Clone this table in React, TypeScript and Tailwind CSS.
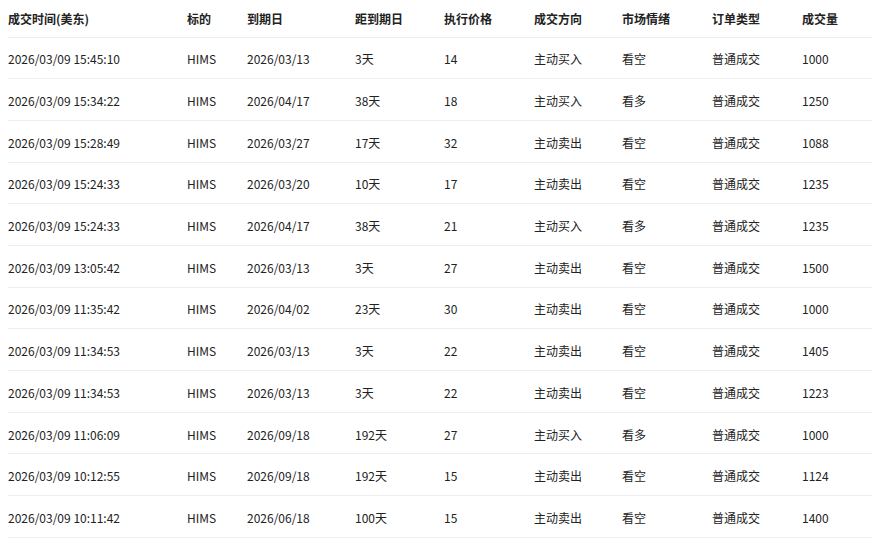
import React from 'react';

const columns = [
  { label: '成交时间(美东)', width: 'w-[179px]' },
  { label: '标的', width: 'w-[60px]' },
  { label: '到期日', width: 'w-[108px]' },
  { label: '距到期日', width: 'w-[89px]' },
  { label: '执行价格', width: 'w-[90px]' },
  { label: '成交方向', width: 'w-[88px]' },
  { label: '市场情绪', width: 'w-[90px]' },
  { label: '订单类型', width: 'w-[90px]' },
  { label: '成交量', width: 'w-[70px]' },
];

const trades = [
  ['2026/03/09 15:45:10', 'HIMS', '2026/03/13', '3天', '14', '主动买入', '看空', '普通成交', '1000'],
  ['2026/03/09 15:34:22', 'HIMS', '2026/04/17', '38天', '18', '主动买入', '看多', '普通成交', '1250'],
  ['2026/03/09 15:28:49', 'HIMS', '2026/03/27', '17天', '32', '主动卖出', '看空', '普通成交', '1088'],
  ['2026/03/09 15:24:33', 'HIMS', '2026/03/20', '10天', '17', '主动卖出', '看空', '普通成交', '1235'],
  ['2026/03/09 15:24:33', 'HIMS', '2026/04/17', '38天', '21', '主动买入', '看多', '普通成交', '1235'],
  ['2026/03/09 13:05:42', 'HIMS', '2026/03/13', '3天', '27', '主动卖出', '看空', '普通成交', '1500'],
  ['2026/03/09 11:35:42', 'HIMS', '2026/04/02', '23天', '30', '主动卖出', '看空', '普通成交', '1000'],
  ['2026/03/09 11:34:53', 'HIMS', '2026/03/13', '3天', '22', '主动卖出', '看空', '普通成交', '1405'],
  ['2026/03/09 11:34:53', 'HIMS', '2026/03/13', '3天', '22', '主动卖出', '看空', '普通成交', '1223'],
  ['2026/03/09 11:06:09', 'HIMS', '2026/09/18', '192天', '27', '主动买入', '看多', '普通成交', '1000'],
  ['2026/03/09 10:12:55', 'HIMS', '2026/09/18', '192天', '15', '主动卖出', '看空', '普通成交', '1124'],
  ['2026/03/09 10:11:42', 'HIMS', '2026/06/18', '100天', '15', '主动卖出', '看空', '普通成交', '1400'],
];

export default function App() {
  return (
    <div className="bg-white min-h-screen px-2 font-['Noto_Sans_CJK_SC','Noto_Sans',sans-serif] text-[12px] text-[#222]">
      <table className="w-[864px] table-fixed border-collapse">
        <thead>
          <tr className="h-[37px] border-b border-[#eeeeee]">
            {columns.map((col) => (
              <th key={col.label} className={`${col.width} p-0 pt-[2px] text-left font-bold align-middle`}>
                {col.label}
              </th>
            ))}
          </tr>
        </thead>
        <tbody>
          {trades.map((row, i) => (
            <tr key={i} className="h-[41.7px] border-b border-[#eeeeee]">
              {row.map((cell, j) => (
                <td key={j} className="p-0 pt-[3px] align-middle whitespace-nowrap">
                  {cell}
                </td>
              ))}
            </tr>
          ))}
        </tbody>
      </table>
    </div>
  );
}
